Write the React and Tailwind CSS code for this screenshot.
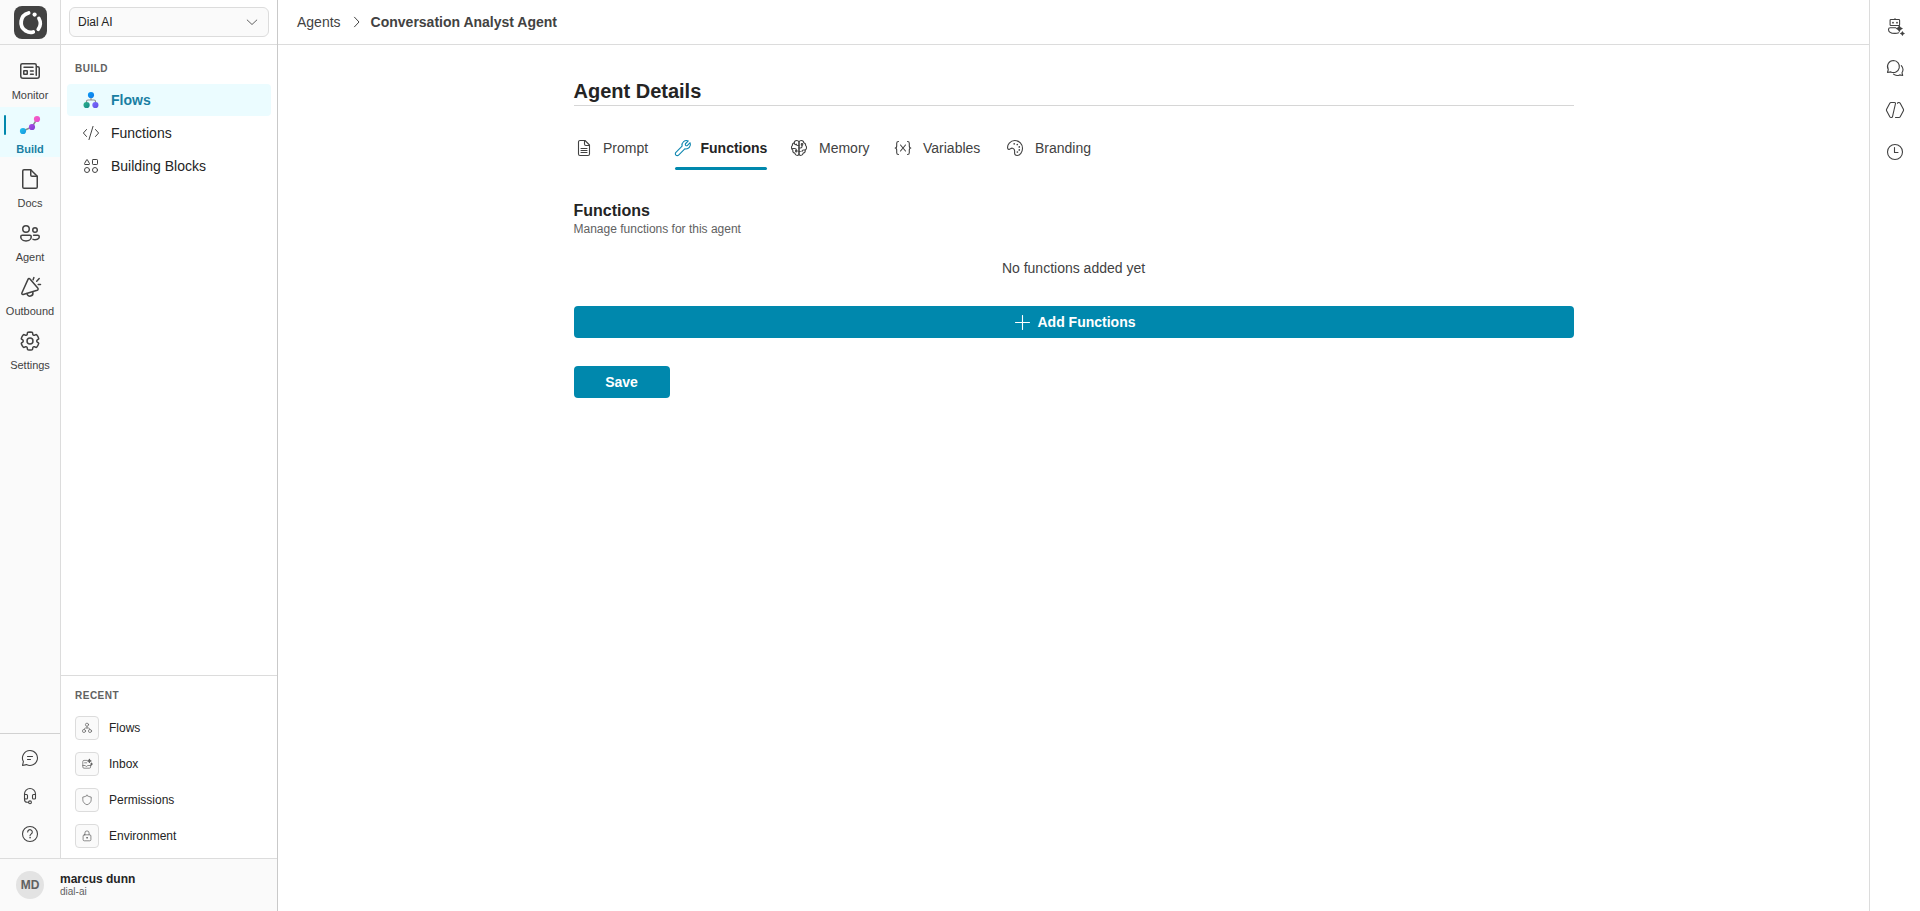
import React from "react";

function Svg({ size = 20, box = 20, sw = 1.1, className = "", children }) {
  return (
    <svg
      width={size}
      height={size}
      viewBox={`0 0 ${box} ${box}`}
      fill="none"
      stroke="currentColor"
      strokeWidth={sw}
      strokeLinecap="round"
      strokeLinejoin="round"
      className={`shrink-0 ${className}`}
    >
      {children}
    </svg>
  );
}

const Logo = () => (
  <svg width="33" height="33" viewBox="0 0 33 33" fill="none" stroke="#fff">
    <rect width="33" height="33" rx="8" fill="#424242" stroke="none" />
    <path d="M14.6 7A9.8 9.8 0 0 0 12 25C14 26.3 17 26.7 19.2 26" strokeWidth="3.8" strokeLinecap="round" />
    <path d="M24.9 12.4C26.9 16 26.6 20.2 24.2 23.4" strokeWidth="3.6" strokeLinecap="round" />
    <circle cx="20.6" cy="8.6" r="2.1" fill="#fff" stroke="none" />
  </svg>
);

const MonitorIcon = () => (
  <Svg size={24} box={24} sw={1.5}>
    <path d="M5 19.25h14a2.25 2.25 0 0 0 2.25-2.25V9.25A1.5 1.5 0 0 0 19.75 7.75h-1.5M18.25 16.25V6.25a1.5 1.5 0 0 0-1.5-1.5H4.25a1.5 1.5 0 0 0-1.5 1.5V17A2.25 2.25 0 0 0 5 19.25" />
    <path d="M6 8.25h9M12.5 12h2.75M12.5 15.25h2.75" />
    <rect x="5.75" y="11.75" width="3.5" height="3.5" rx="0.3" />
  </Svg>
);

const BuildIcon = () => (
  <svg width="24" height="24" viewBox="0 0 24 24" fill="none">
    <defs>
      <linearGradient id="b1" x1="0" y1="0" x2="1" y2="1"><stop stopColor="#fb5dbc" /><stop offset="1" stopColor="#e04fd8" /></linearGradient>
      <linearGradient id="b2" x1="0" y1="0" x2="1" y2="1"><stop stopColor="#b04be8" /><stop offset="1" stopColor="#7b3fd0" /></linearGradient>
      <linearGradient id="b3" x1="0" y1="0" x2="1" y2="1"><stop stopColor="#22c3ee" /><stop offset="1" stopColor="#1795dd" /></linearGradient>
    </defs>
    <path d="M5 18l9-4 5-8" stroke="#8a8a8a" strokeWidth="1.5" />
    <circle cx="19" cy="6" r="3.1" fill="url(#b1)" />
    <circle cx="14" cy="14" r="3.1" fill="url(#b2)" />
    <circle cx="5" cy="18" r="3.1" fill="url(#b3)" />
  </svg>
);

const DocsIcon = () => (
  <Svg size={24} box={24} sw={1.5}>
    <path d="M6 2.75h6.7L19.25 9.3V20c0 .7-.55 1.25-1.25 1.25H6c-.7 0-1.25-.55-1.25-1.25V4c0-.7.55-1.25 1.25-1.25z" />
    <path d="M12.75 3v5c0 .7.55 1.25 1.25 1.25h5" />
  </Svg>
);

const AgentIcon = () => (
  <Svg size={24} box={24} sw={1.5}>
    <circle cx="8" cy="8" r="3.25" />
    <circle cx="17" cy="9" r="2.25" />
    <path d="M4.25 14.25h7.5c.8 0 1.5.65 1.5 1.5 0 0 0 4.25-5.25 4.25S2.75 15.75 2.75 15.75c0-.85.65-1.5 1.5-1.5z" />
    <path d="M15.6 14.25h4.15c.85 0 1.5.65 1.5 1.5 0 0 0 2.9-4.25 2.9-.8 0-1.5-.1-2-.3" />
  </Svg>
);

const OutboundIcon = () => (
  <Svg size={24} box={24} sw={1.5}>
    <path d="M10.1 4.1 3.95 17.7c-.5 1.1.2 2.1 1.3 1.8l13.9-4.2c1-.35 1.3-1.4.6-2.2l-7.75-9.2c-.6-.7-1.5-.6-1.9.2z" />
    <path d="M9 18.6c.4 1.9 1.8 2.9 3.5 2.5s2.7-1.8 2.4-3.6" />
    <path d="m15.9 2.6-.8 2.1M21.2 3.6l-2.5 2.6M20.2 9.4h2.3" />
  </Svg>
);

const SettingsIcon = () => (
  <Svg size={24} box={24} sw={1.6}>
    <g transform="translate(12 12) scale(.93) translate(-12 -12)">
      <path d="M12.012 2.25c.734.008 1.465.093 2.182.253a.75.75 0 0 1 .582.649l.17 1.527a1.384 1.384 0 0 0 1.927 1.116l1.401-.615a.75.75 0 0 1 .85.174 9.792 9.792 0 0 1 2.204 3.792.75.75 0 0 1-.271.825l-1.242.916a1.381 1.381 0 0 0 0 2.226l1.243.915a.75.75 0 0 1 .272.826 9.797 9.797 0 0 1-2.204 3.792.75.75 0 0 1-.848.175l-1.407-.617a1.38 1.38 0 0 0-1.926 1.114l-.169 1.526a.75.75 0 0 1-.572.647 9.518 9.518 0 0 1-4.406 0 .75.75 0 0 1-.572-.647l-.168-1.524a1.382 1.382 0 0 0-1.926-1.11l-1.406.616a.75.75 0 0 1-.849-.175 9.798 9.798 0 0 1-2.204-3.796.75.75 0 0 1 .272-.826l1.243-.916a1.38 1.38 0 0 0 0-2.226l-1.243-.914a.75.75 0 0 1-.271-.826 9.793 9.793 0 0 1 2.204-3.792.75.75 0 0 1 .85-.174l1.4.615a1.387 1.387 0 0 0 1.93-1.118l.17-1.526a.75.75 0 0 1 .583-.65c.717-.159 1.45-.243 2.201-.252Z" />
      <circle cx="12" cy="12" r="3.2" />
    </g>
  </Svg>
);

const FlowsColorIcon = () => (
  <svg width="20" height="20" viewBox="0 0 20 20" fill="none" className="shrink-0">
    <defs>
      <linearGradient id="f1" x1="0" y1="0" x2="1" y2="1"><stop stopColor="#0a9af5" /><stop offset="1" stopColor="#0f7ae8" /></linearGradient>
      <linearGradient id="f2" x1="0" y1="0" x2="1" y2="1"><stop stopColor="#2fb38a" /><stop offset="1" stopColor="#158a8c" /></linearGradient>
      <linearGradient id="f3" x1="0" y1="0" x2="1" y2="1"><stop stopColor="#7a6cff" /><stop offset="1" stopColor="#6250e4" /></linearGradient>
    </defs>
    <path d="M10 7v3M5.5 13v-1.5c0-.8.7-1.5 1.5-1.5h6c.8 0 1.5.7 1.5 1.5V13" stroke="#8f8f8f" strokeWidth="1.2" />
    <circle cx="10" cy="5" r="3.1" fill="url(#f1)" />
    <circle cx="5.6" cy="15" r="3.1" fill="url(#f2)" />
    <circle cx="14.4" cy="15" r="3.1" fill="url(#f3)" />
  </svg>
);

const CodeIcon = () => (
  <Svg sw={1}>
    <path d="M5.5 6.5 2.4 10l3.1 3.5M14.5 6.5l3.1 3.5-3.1 3.5M12 3.4 8 16.6" />
  </Svg>
);

const BlocksIcon = () => (
  <Svg sw={1}>
    <path d="M5.7 3.7c.15-.3.45-.3.6 0l2.2 3.9c.25.5 0 .9-.5.9H4c-.5 0-.75-.4-.5-.9z" />
    <rect x="11.5" y="3.5" width="5" height="5" rx="0.7" />
    <circle cx="6" cy="14" r="2.5" />
    <circle cx="14" cy="14" r="2.5" />
  </Svg>
);

const ChatIcon = () => (
  <Svg>
    <path d="M10 2.5a7.5 7.5 0 1 1-3.6 14.1L2.5 17.5l.9-3.9A7.5 7.5 0 0 1 10 2.5z" />
    <path d="M7.5 8.5h5M7.5 11.5h3" />
  </Svg>
);

const HeadsetIcon = () => (
  <Svg>
    <path d="M4.5 12V8a5.5 5.5 0 0 1 11 0v4" />
    <path d="M4.5 8.5h2c.55 0 1 .45 1 1V12c0 .55-.45 1-1 1h-1c-.55 0-1-.45-1-1M15.5 8.5h-2c-.55 0-1 .45-1 1V12c0 .55.45 1 1 1h1c.55 0 1-.45 1-1" />
    <path d="M4.5 12v1.5a2.8 2.8 0 0 0 2.8 2.8h1.2" />
    <circle cx="10" cy="16.3" r="1.4" />
  </Svg>
);

const HelpIcon = () => (
  <Svg>
    <circle cx="10" cy="10" r="7.5" />
    <path d="M7.7 8a2.3 2.3 0 1 1 3.7 1.8c-.8.6-1.4 1-1.4 2" />
    <circle cx="10" cy="13.7" r="0.5" fill="currentColor" strokeWidth="0.5" />
  </Svg>
);

const FlowsSmall = () => (
  <Svg size={12} sw={1.2}>
    <circle cx="10" cy="4.5" r="2.6" />
    <circle cx="5" cy="15" r="2.6" />
    <circle cx="15" cy="15" r="2.6" />
    <path d="M10 7.5V10M5.5 12c0-1.5 1-2 2-2h5c1 0 2 .5 2 2" />
  </Svg>
);
const InboxSmall = () => (
  <Svg size={12} sw={1.2}>
    <path d="M10 4H5a2 2 0 0 0-2 2v9a2 2 0 0 0 2 2h9a2 2 0 0 0 2-2v-3M6 8h3.5M3 12.5h4c.3 1 1 1.5 2 1.5s1.8-.5 2-1.5h5" />
    <path d="M14 2l.8 2 2 .8-2 .8-.8 2-.8-2-2-.8 2-.8zM17.5 8.5v3M16 10h3" strokeWidth="1.8" fill="currentColor" />
  </Svg>
);
const ShieldSmall = () => (
  <Svg size={12} sw={1.2}>
    <path d="M10 2.5c2 1.5 4.3 2.2 7 2.5v4.5c0 4-2.5 6.7-7 8.500-4.500-1.800-7-4.500-7-8.500V5c2.700-.3 5-1 7-2.500z" />
  </Svg>
);
const LockSmall = () => (
  <Svg size={12} sw={1.2}>
    <rect x="3.5" y="8" width="13" height="10" rx="2" />
    <path d="M6.5 8V5a3.5 3.5 0 0 1 7 0v3" />
    <circle cx="10" cy="13" r="0.8" fill="currentColor" />
  </Svg>
);

const PromptIcon = () => (
  <Svg>
    <path d="M6 2.5h5L15.5 7v9c0 .8-.7 1.5-1.5 1.5H6c-.8 0-1.5-.7-1.5-1.5V4c0-.8.7-1.5 1.5-1.5z" />
    <path d="M10.5 2.5V6c0 .8.7 1.5 1.5 1.5h3.5M7 10.500h6M7 12.500h6M7 14.500h6" />
  </Svg>
);
const WrenchIcon = () => (
  <Svg className="text-[#0f87b0]">
    <path d="M15.3 2.9a4.6 4.6 0 0 0-6.2 5.3L2.9 14.4a1.9 1.9 0 0 0 2.7 2.7l6.2-6.2a4.6 4.6 0 0 0 5.3-6.2l-2.6 2.6c-.5.5-1.3.5-1.8 0s-.5-1.3 0-1.8z" />
  </Svg>
);
const BrainIcon = () => (
  <Svg>
    <path d="M10 4.2C9.6 3 8.7 2.5 7.7 2.5c-1.4 0-2.4 1-2.4 2.2C3.9 5 3.3 6 3.4 7.3 2.6 8 2.3 9 2.5 10c.1 1 .6 1.7 1.3 2.1-.2 1.6.6 2.8 2 3 .3 1.5 1.3 2.4 2.4 2.4 1 0 1.8-.8 1.8-2z" />
    <path d="M10 4.2c.4-1.2 1.3-1.7 2.3-1.7 1.4 0 2.4 1 2.4 2.2 1.4.3 2 1.3 1.9 2.6.8.7 1.1 1.7.9 2.7-.1 1-.6 1.7-1.3 2.1.2 1.6-.6 2.8-2 3-.3 1.5-1.3 2.4-2.4 2.4-1 0-1.8-.8-1.8-2z" />
    <path d="M3.5 10.500h2.200a1.600 1.600 0 0 1 1.600 1.600M10 7.500H8.800A1.500 1.500 0 0 1 7.300 6M10 13.500h1.300M10 10h1.500A1.500 1.500 0 0 0 13 8.500V7.200M16.200 12h-1.700a1.500 1.500 0 0 0-1.500 1.500M5.300 4.800c0 1 .5 1.700 1.400 1.900" />
    <circle cx="13" cy="6.4" r="0.8" />
    <circle cx="7.3" cy="13.1" r="0.8" />
  </Svg>
);
const VariableIcon = () => (
  <Svg>
    <path d="M5.5 3.5c-1.300 0-1.800.7-1.800 1.800v2.400c0 1.300-.5 2.300-1.500 2.300 1 0 1.500 1 1.500 2.300v2.400c0 1.100.5 1.800 1.800 1.800M14.500 3.500c1.300 0 1.800.7 1.800 1.800v2.400c0 1.300.5 2.300 1.500 2.300-1 0-1.500 1-1.500 2.300v2.400c0 1.100-.5 1.800-1.800 1.800M7.500 7l5 6M12.500 7l-5 6" />
  </Svg>
);
const PaletteIcon = () => (
  <Svg>
    <path d="M2.7 10.3c-.8-3.500 2.700-7.800 7.100-7.800 4.500 0 7.800 3.700 7.700 7.900-.1 3.800-2.500 7.100-5.300 7.100-2 0-2.800-1.400-2.600-3.300.2-2-.3-3.700-2.100-4-1.600-.3-2.300 1-3.300 1.200-.8.100-1.300-.4-1.500-1.100z" />
    <g fill="currentColor" stroke="none">
      <circle cx="9.2" cy="5.8" r="0.85" />
      <circle cx="12.3" cy="6.5" r="0.85" />
      <circle cx="14.3" cy="8.9" r="0.85" />
      <circle cx="14.3" cy="11.9" r="0.85" />
      <circle cx="12.4" cy="14" r="0.85" />
    </g>
  </Svg>
);

const BotSparkleIcon = () => (
  <Svg>
    <rect x="5.1" y="3.5" width="9.5" height="6" rx="0.8" />
    <path d="M10 3.500V2.500M10.800 11.800H5.300c-1 0-1.800.7-1.800 1.700 0 2.300 2.500 3.900 6.500 3.900 1.500 0 2.700-.2 3.700-.600" />
    <g fill="currentColor" stroke="none">
      <circle cx="8" cy="6.7" r="0.9" />
      <circle cx="12" cy="6.7" r="0.9" />
      <path d="M14.3 9l1.300 2.300 2.400 1.300-2.400 1.300-1.300 2.300-1.300-2.300-2.400-1.300 2.400-1.300z" />
      <path d="M17.400 14.900l.9 1.700 1.700.9-1.700.9-.9 1.700-.9-1.700-1.700-.9 1.700-.9z" />
    </g>
  </Svg>
);
const ChatsIcon = () => (
  <Svg>
    <path d="M8.5 2.5a6 6 0 1 1-2.700 11.400l-3.300.6.800-3A6 6 0 0 1 8.500 2.500z" />
    <path d="M8.500 16.200c1 .9 2.200 1.300 3.500 1.300 1 0 1.900-.2 2.700-.600l3 .600-.700-2.700c1.400-2.400 1-5.400-.7-7.200" />
  </Svg>
);
const HexCodeIcon = () => (
  <Svg>
    <path d="M9.500 2.500H6c-.5 0-.9.200-1.200.7L1.600 9.300c-.2.400-.2 1 0 1.400l3.200 6.100c.3.500.7.700 1.200.7h.5c.5 0 .9-.3 1-.8L10.500 3.500c.2-.5-.3-1-1-1z" />
    <path d="M10.500 17.500H14c.5 0 .9-.2 1.200-.7l3.200-6.100c.2-.4.2-1 0-1.400l-3.200-6.100c-.3-.5-.7-.7-1.200-.7h-.5c-.5 0-.9.3-1 .8" />
  </Svg>
);
const ClockIcon = () => (
  <Svg>
    <circle cx="10" cy="10" r="7.5" />
    <path d="M9.5 5.500v5H13" />
  </Svg>
);

const railItems = [
  ["Monitor", MonitorIcon],
  ["Build", BuildIcon],
  ["Docs", DocsIcon],
  ["Agent", AgentIcon],
  ["Outbound", OutboundIcon],
  ["Settings", SettingsIcon],
];

const recent = [
  ["Flows", FlowsSmall],
  ["Inbox", InboxSmall],
  ["Permissions", ShieldSmall],
  ["Environment", LockSmall],
];

const tabs = [
  ["Prompt", PromptIcon, "w-[99.5px]", "ml-[9.5px]"],
  ["Functions", WrenchIcon, "w-[116px]", "ml-[7.5px]"],
  ["Memory", BrainIcon, "w-[104px]", "ml-[10px]"],
  ["Variables", VariableIcon, "w-[112px]", "ml-[10px]"],
  ["Branding", PaletteIcon, "", "ml-[10px]"],
];

function Rail() {
  return (
    <div className="flex w-[61px] shrink-0 flex-col border-r border-[#dcdcdc] bg-[#fafafa]">
      <div className="flex h-[45px] justify-center border-b border-[#dcdcdc] pt-[6px]">
        <Logo />
      </div>
      <nav className="flex flex-1 flex-col gap-1 pt-2">
        {railItems.map(([label, Icon]) => {
          const on = label === "Build";
          return (
            <div
              key={label}
              className={`relative flex h-[50px] flex-col items-center pt-1.5 ${on ? "bg-[#ebfcff] font-bold text-[#1a7fa3]" : "text-[#424242]"}`}
            >
              {on && <span className="absolute left-1 top-2 h-5 w-0.5 rounded-sm bg-[#0088ad]" />}
              <Icon />
              <span className="mt-[5px] text-[11px] leading-[14px]">{label}</span>
            </div>
          );
        })}
      </nav>
      <div className="flex h-[125px] flex-col items-center gap-[18px] border-t border-[#d1d1d1] pt-[14px] text-[#424242]">
        <ChatIcon />
        <HeadsetIcon />
        <HelpIcon />
      </div>
    </div>
  );
}

function Panel() {
  return (
    <div className="flex w-[216px] flex-col bg-white">
      <div className="flex h-[45px] border-b border-[#dcdcdc] px-2 pt-[7px]">
        <div className="flex h-[30px] w-[200px] items-center justify-between rounded-md border border-[#dcdcdc] bg-[#fafafa] pl-2 pr-[10px] text-xs">
          Dial AI
          <Svg size={12} box={12} sw={1} className="text-[#616161]">
            <path d="m1.2 4 4.800 4.500L10.800 4" />
          </Svg>
        </div>
      </div>
      <div className="flex flex-1 flex-col px-1.5 pt-4">
        <h3 className="pl-2 pt-px text-[10px] font-bold leading-[14px] tracking-[0.05em] text-[#616161]">BUILD</h3>
        <div className="mt-2 flex flex-col gap-px text-sm">
          <div className="flex h-8 items-center gap-2.5 rounded bg-[#ebfcff] pl-[14px] font-bold text-[#1a7fa3]">
            <FlowsColorIcon />
            Flows
          </div>
          <div className="flex h-8 items-center gap-2.5 pl-[14px]">
            <span className="text-[#424242]"><CodeIcon /></span>
            Functions
          </div>
          <div className="flex h-8 items-center gap-2.5 pl-[14px]">
            <span className="text-[#424242]"><BlocksIcon /></span>
            Building Blocks
          </div>
        </div>
      </div>
      <div className="flex h-[183px] flex-col border-t border-[#dcdcdc] px-[14px] pt-[13px]">
        <h3 className="text-[10px] font-bold leading-[14px] tracking-[0.05em] text-[#616161]">RECENT</h3>
        <div className="mt-[13px] flex flex-col gap-3">
          {recent.map(([label, Icon]) => (
            <div key={label} className="flex h-6 items-center gap-2.5 text-xs">
              <span className="flex size-6 items-center justify-center rounded border border-[#dcdcdc] bg-[#fafafa] text-[#616161]">
                <Icon />
              </span>
              {label}
            </div>
          ))}
        </div>
      </div>
    </div>
  );
}

export default function App() {
  return (
    <div className="flex h-[911px] w-[1920px] overflow-hidden bg-white font-['Liberation_Sans',Arial,sans-serif] text-[#242424]">
      <aside className="flex w-[278px] shrink-0 flex-col border-r border-[#c9c9c9]">
        <div className="flex flex-1">
          <Rail />
          <Panel />
        </div>
        <div className="flex h-[53px] items-center gap-4 border-t border-[#dcdcdc] bg-[#fafafa] pl-4">
          <div className="flex size-7 items-center justify-center rounded-full bg-[#e3e3e3] text-xs font-bold text-[#616161]">MD</div>
          <div className="flex flex-col pb-px">
            <span className="text-xs font-bold leading-[14px]">marcus dunn</span>
            <span className="text-[10px] leading-3 text-[#616161]">dial-ai</span>
          </div>
        </div>
      </aside>

      <div className="flex flex-1 flex-col">
        <header className="flex h-[45px] items-center border-b border-[#dcdcdc] pl-[19px] text-sm text-[#424242]">
          <span>Agents</span>
          <Svg size={12} box={12} sw={1} className="ml-[10px] mr-[8px]">
            <path d="m3.5 1.200 4.500 4.800-4.500 4.800" />
          </Svg>
          <span className="font-bold">Conversation Analyst Agent</span>
        </header>
        <main className="flex w-[1000px] flex-col self-center pt-[32px]">
          <h1 className="h-[29px] border-b border-[#d6d6d6] text-xl font-bold leading-7">Agent Details</h1>
          <div className="mt-[30px] flex h-[34px] text-sm text-[#424242]">
            {tabs.map(([label, Icon, width, gap]) => {
              const on = label === "Functions";
              return (
                <div key={label} className={`flex flex-col ${width}`}>
                  <div className="flex h-6 items-center">
                    <Icon />
                    <span className={`${gap} ${on ? "font-bold text-[#242424]" : ""}`}>{label}</span>
                  </div>
                  {on && <div className="ml-[2px] mt-[7px] h-[3px] w-[92px] rounded-full bg-[#0088ad]" />}
                </div>
              );
            })}
          </div>
          <h2 className="mt-[31px] text-base font-bold leading-5">Functions</h2>
          <p className="text-xs leading-4 text-[#616161]">Manage functions for this agent</p>
          <p className="mt-[21px] text-center text-sm leading-5 text-[#424242]">No functions added yet</p>
          <button className="mt-7 flex h-8 items-center justify-center gap-2 rounded bg-[#0088ad] pl-[3px] text-sm font-bold text-white">
            <Svg size={15} box={15}>
              <path d="M7.5.5v14M.5 7.500h14" />
            </Svg>
            Add Functions
          </button>
          <button className="mt-7 h-8 w-24 rounded bg-[#0088ad] text-sm font-bold text-white">Save</button>
        </main>
      </div>

      <div className="flex w-[51px] shrink-0 flex-col items-center gap-[22px] border-l border-[#dcdcdc] pt-[16px] text-[#424242]">
        <BotSparkleIcon />
        <ChatsIcon />
        <HexCodeIcon />
        <ClockIcon />
      </div>
    </div>
  );
}
